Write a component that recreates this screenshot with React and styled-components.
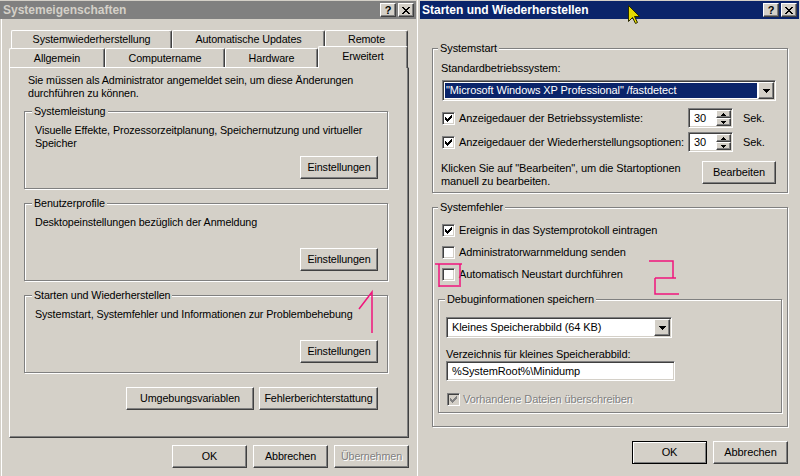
import React from 'react';
import styled, { createGlobalStyle, css } from 'styled-components';

const face = '#d4d0c8';
const shadow = '#808080';
const dark = '#404040';
const navy = '#0a246a';
const pink = '#f0147c';
const font = '"Liberation Sans", Arial, sans-serif';

const GlobalStyle = createGlobalStyle`
  html, body { margin: 0; padding: 0; background: ${face}; }
  body { font-family: ${font}; font-size: 11px; color: #000; }
  * { box-sizing: border-box; }
`;

const Desktop = styled.div`
  position: relative;
  display: flex;
  width: 800px;
  height: 476px;
  overflow: hidden;
  background: ${face};
`;

const Window = styled.div`
  display: flex;
  flex-direction: column;
  height: 476px;
  padding-top: 1px;
  background: ${face};
  line-height: 13px;
`;

const LeftWin = styled(Window)`
  width: 417px;
  flex: none;
  padding-right: 1px;
  font-size: 10.75px;
  letter-spacing: -0.1px;
`;

const RightWin = styled(Window)`
  flex: 1;
  border-left: 1px solid #fff;
  padding-left: 2px;
  padding-right: 1px;
  font-size: 11px;
  letter-spacing: -0.1px;
`;

const TitleBar = styled.div`
  display: flex;
  align-items: center;
  gap: 2px;
  height: 18px;
  flex: none;
  padding: 0 2px 0 ${(p) => (p.$active ? 2 : 3)}px;
  background: ${(p) => (p.$active ? navy : shadow)};
  color: ${(p) => (p.$active ? '#fff' : face)};
  font: bold 12px ${font};
  letter-spacing: 0;
`;

const TitleText = styled.span`
  flex: 1;
  white-space: nowrap;
`;

const raised = css`
  background: ${face};
  border: 1px solid;
  border-color: #fff ${dark} ${dark} #fff;
  box-shadow: inset -1px -1px ${shadow};
`;

const sunken = css`
  border: 1px solid;
  border-color: ${shadow} #fff #fff ${shadow};
  box-shadow: inset 1px 1px ${dark}, inset -1px -1px ${face};
`;

const CaptionBtn = styled.span`
  ${raised};
  width: 16px;
  height: 14px;
  display: flex;
  align-items: center;
  justify-content: center;
  color: #000;
  font: bold 11px ${font};
  line-height: 12px;
`;

const PixelIcon = styled.svg`
  display: block;
  shape-rendering: crispEdges;
  flex: none;
`;

const CloseGlyph = () => (
  <PixelIcon width="8" height="7" viewBox="0 0 8 7">
    <path
      fill="#000"
      d="M0 0h2v1H0z M6 0h2v1H6z M1 1h2v1H1z M5 1h2v1H5z M2 2h4v1H2z M3 3h2v1H3z M2 4h4v1H2z M1 5h2v1H1z M5 5h2v1H5z M0 6h2v1H0z M6 6h2v1H6z"
    />
  </PixelIcon>
);

const CaptionButtons = () => (
  <>
    <CaptionBtn>?</CaptionBtn>
    <CaptionBtn>
      <CloseGlyph />
    </CaptionBtn>
  </>
);

/* ---------- left window ---------- */

const LeftBody = styled.div`
  flex: 1;
  display: flex;
  flex-direction: column;
  padding: 11px 0 0 9px;
  box-shadow: inset 1px 0 ${face}, inset 2px 0 #fff;
`;

const TabStrip = styled.div`
  display: flex;
  flex-direction: column;
`;

const TabRow = styled.div`
  display: flex;
  height: ${(p) => p.$h}px;
  padding-left: ${(p) => p.$indent || 0}px;
`;

const Tab = styled.div`
  width: ${(p) => p.$w}px;
  display: flex;
  align-items: center;
  justify-content: center;
  white-space: nowrap;
  background: ${face};
  border-top: 1px solid #fff;
  border-left: 1px solid #fff;
  border-right: 1px solid ${dark};
  border-radius: 2px 2px 0 0;
  box-shadow: inset -1px 0 ${shadow};
  ${(p) =>
    p.$selected &&
    css`
      position: relative;
      z-index: 1;
      align-self: flex-end;
      height: 22px;
      margin-bottom: -1px;
      padding-bottom: 2px;
    `}
`;

const TabPanel = styled.div`
  width: 400px;
  height: 371px;
  display: flex;
  flex-direction: column;
  padding: 6px 20px 0 14px;
  border: 1px solid;
  border-color: #fff ${dark} ${dark} #fff;
  box-shadow: inset -1px -1px ${shadow};
`;

const Intro = styled.div`
  padding-left: 4px;
  white-space: nowrap;
`;

const GroupStack = styled.div`
  display: flex;
  flex-direction: column;
  gap: 8px;
  margin-top: 5px;
`;

const Group = styled.fieldset`
  margin: ${(p) => p.$mt || 0}px 0 0 ${(p) => p.$ml || 0}px;
  min-width: 0;
  width: ${(p) => (p.$w ? `${p.$w}px` : 'auto')};
  padding: ${(p) => p.$pad};
  border: 1px solid ${shadow};
  box-shadow: inset 1px 1px #fff, 1px 1px #fff;
`;

const Legend = styled.legend`
  padding: 0 2px;
  margin-left: ${(p) => p.$ml ?? -3}px;
  line-height: 13px;
  background: ${face};
  white-space: nowrap;
`;

const GroupContent = styled.div`
  display: flex;
  flex-direction: column;
  height: 55px;
  white-space: nowrap;
`;

const Button = styled.button`
  ${raised};
  width: ${(p) => p.$w || 75}px;
  height: 23px;
  flex: none;
  padding: 0;
  font: inherit;
  letter-spacing: inherit;
  color: #000;
  white-space: nowrap;
  ${(p) =>
    p.$default &&
    css`
      border-color: #000;
      box-shadow: inset 1px 1px #fff, inset -1px -1px ${shadow};
    `}
  ${(p) =>
    p.$disabled &&
    css`
      color: ${shadow};
      text-shadow: 1px 1px #fff;
    `}
`;

const GroupButton = styled(Button)`
  align-self: flex-end;
  margin-top: auto;
`;

const ButtonRow = styled.div`
  display: flex;
  justify-content: flex-end;
  gap: ${(p) => p.$gap ?? 6}px;
  margin-top: ${(p) => p.$mt || 0}px;
  padding-right: ${(p) => p.$pr || 0}px;
  width: ${(p) => (p.$w ? `${p.$w}px` : 'auto')};
`;

const LeftGroup = ({ title, children }) => (
  <Group $pad="6px 9px 9px 10px">
    <Legend>{title}</Legend>
    <GroupContent>
      <div>{children}</div>
      <GroupButton $w={78}>Einstellungen</GroupButton>
    </GroupContent>
  </Group>
);

/* ---------- right window ---------- */

const RightBody = styled.div`
  flex: 1;
  display: flex;
  flex-direction: column;
  padding: 23px 0 0 12px;
`;

const Column = styled.div`
  display: flex;
  flex-direction: column;
`;

const TextLine = styled.div`
  white-space: nowrap;
  margin-top: ${(p) => p.$mt || 0}px;
`;

const Combo = styled.div`
  ${sunken};
  display: flex;
  width: ${(p) => p.$w}px;
  height: 21px;
  padding: 1px;
  margin: ${(p) => p.$mt || 0}px 0 0 ${(p) => p.$ml || 0}px;
  background: #fff;
`;

const ComboValue = styled.div`
  flex: 1;
  display: flex;
  align-items: center;
  padding-left: ${(p) => (p.$selected ? 1 : 3)}px;
  margin: 1px;
  background: ${(p) => (p.$selected ? navy : '#fff')};
  color: ${(p) => (p.$selected ? '#fff' : '#000')};
  white-space: nowrap;
  overflow: hidden;
`;

const DropButton = styled.div`
  ${raised};
  width: 16px;
  flex: none;
  display: flex;
  align-items: center;
  justify-content: center;
`;

const DownArrow = () => (
  <PixelIcon width="7" height="4" viewBox="0 0 7 4">
    <path fill="#000" d="M0 0h7v1H0z M1 1h5v1H1z M2 2h3v1H2z M3 3h1v1H3z" />
  </PixelIcon>
);

const SmallArrow = ({ up }) => (
  <PixelIcon width="5" height="3" viewBox="0 0 5 3">
    <path
      fill="#000"
      d={up ? 'M2 0h1v1H2z M1 1h3v1H1z M0 2h5v1H0z' : 'M0 0h5v1H0z M1 1h3v1H1z M2 2h1v1H2z'}
    />
  </PixelIcon>
);

const SpinRow = styled.div`
  display: grid;
  grid-template-columns: 237px 45px auto;
  column-gap: 10px;
  align-items: center;
  height: 20px;
  margin-top: ${(p) => p.$mt || 0}px;
`;

const SpinBox = styled.div`
  ${sunken};
  display: flex;
  height: 20px;
  padding: 1px;
  background: #fff;
`;

const SpinValue = styled.div`
  flex: 1;
  display: flex;
  align-items: center;
  padding-left: 4px;
`;

const SpinButtons = styled.div`
  width: 15px;
  display: flex;
  flex-direction: column;
`;

const SpinBtn = styled.div`
  ${raised};
  flex: 1;
  display: flex;
  align-items: center;
  justify-content: center;
`;

const CheckRow = styled.div`
  display: flex;
  align-items: center;
  gap: ${(p) => p.$gap ?? 4}px;
  height: 16px;
  white-space: nowrap;
  margin-top: ${(p) => p.$mt || 0}px;
  ${(p) =>
    p.$disabled &&
    css`
      color: ${shadow};
      text-shadow: 1px 1px #fff;
    `}
`;

const CheckBox = styled.span`
  ${sunken};
  width: 13px;
  height: 13px;
  flex: none;
  margin-left: 1px;
  display: flex;
  align-items: center;
  justify-content: center;
  background: ${(p) => (p.$disabled ? face : '#fff')};
`;

const Check = ({ checked, disabled }) => (
  <CheckBox $disabled={disabled}>
    {checked && (
      <PixelIcon width="7" height="7" viewBox="0 0 7 7">
        <path
          fill={disabled ? shadow : '#000'}
          d="M6 0h1v1H6z M5 1h2v1H5z M0 2h1v1H0z M4 2h3v1H4z M0 3h2v1H0z M3 3h3v1H3z M0 4h5v1H0z M1 5h3v1H1z M2 6h1v1H2z"
        />
      </PixelIcon>
    )}
  </CheckBox>
);

const EditRow = styled.div`
  display: flex;
  justify-content: space-between;
  align-items: flex-start;
  height: 27px;
  margin-top: 9px;
`;

const EditText = styled.div`
  padding-top: 1px;
  white-space: nowrap;
`;

const TextField = styled.div`
  ${sunken};
  display: flex;
  align-items: center;
  width: ${(p) => p.$w}px;
  height: 20px;
  padding: 1px 1px 1px 5px;
  background: #fff;
  white-space: nowrap;
`;

/* ---------- overlay: annotations and pointer ---------- */

const Overlay = styled.svg`
  position: absolute;
  left: 0;
  top: 0;
  width: 800px;
  height: 476px;
  pointer-events: none;
`;

const Spinner = () => (
  <SpinBox>
    <SpinValue>30</SpinValue>
    <SpinButtons>
      <SpinBtn>
        <SmallArrow up />
      </SpinBtn>
      <SpinBtn>
        <SmallArrow />
      </SpinBtn>
    </SpinButtons>
  </SpinBox>
);

export default function App() {
  return (
    <>
      <GlobalStyle />
      <Desktop>
        <LeftWin>
          <TitleBar>
            <TitleText>Systemeigenschaften</TitleText>
            <CaptionButtons />
          </TitleBar>
          <LeftBody>
            <TabStrip>
              <TabRow $h={18} $indent={2}>
                <Tab $w={161}>Systemwiederherstellung</Tab>
                <Tab $w={153}>Automatische Updates</Tab>
                <Tab $w={83}>Remote</Tab>
              </TabRow>
              <TabRow $h={19}>
                <Tab $w={96}>Allgemein</Tab>
                <Tab $w={120}>Computername</Tab>
                <Tab $w={93}>Hardware</Tab>
                <Tab $w={90} $selected>
                  Erweitert
                </Tab>
              </TabRow>
            </TabStrip>
            <TabPanel>
              <Intro>
                Sie müssen als Administrator angemeldet sein, um diese Änderungen
                <br />
                durchführen zu können.
              </Intro>
              <GroupStack>
                <LeftGroup title="Systemleistung">
                  Visuelle Effekte, Prozessorzeitplanung, Speichernutzung und virtueller
                  <br />
                  Speicher
                </LeftGroup>
                <LeftGroup title="Benutzerprofile">
                  Desktopeinstellungen bezüglich der Anmeldung
                </LeftGroup>
                <LeftGroup title="Starten und Wiederherstellen">
                  Systemstart, Systemfehler und Informationen zur Problembehebung
                </LeftGroup>
              </GroupStack>
              <ButtonRow $mt={14} $gap={5} $pr={10}>
                <Button $w={128}>Umgebungsvariablen</Button>
                <Button $w={119}>Fehlerberichterstattung</Button>
              </ButtonRow>
            </TabPanel>
            <ButtonRow $mt={7} $w={400}>
              <Button>OK</Button>
              <Button>Abbrechen</Button>
              <Button $disabled>Übernehmen</Button>
            </ButtonRow>
          </LeftBody>
        </LeftWin>

        <RightWin>
          <TitleBar $active>
            <TitleText>Starten und Wiederherstellen</TitleText>
            <CaptionButtons />
          </TitleBar>
          <RightBody>
            <Group $w={356} $pad="7px 11px 4px 8px">
              <Legend>Systemstart</Legend>
              <Column>
                <TextLine>Standardbetriebssystem:</TextLine>
                <Combo $w={334} $mt={5} $ml={1}>
                  <ComboValue $selected>"Microsoft Windows XP Professional" /fastdetect</ComboValue>
                  <DropButton>
                    <DownArrow />
                  </DropButton>
                </Combo>
                <SpinRow $mt={7}>
                  <CheckRow>
                    <Check checked />
                    Anzeigedauer der Betriebssystemliste:
                  </CheckRow>
                  <Spinner />
                  <span>Sek.</span>
                </SpinRow>
                <SpinRow $mt={4}>
                  <CheckRow>
                    <Check checked />
                    Anzeigedauer der Wiederherstellungsoptionen:
                  </CheckRow>
                  <Spinner />
                  <span>Sek.</span>
                </SpinRow>
                <EditRow>
                  <EditText>
                    Klicken Sie auf "Bearbeiten", um die Startoptionen
                    <br />
                    manuell zu bearbeiten.
                  </EditText>
                  <Button $w={74}>Bearbeiten</Button>
                </EditRow>
              </Column>
            </Group>

            <Group $w={356} $mt={8} $pad="8px 11px 13px 8px">
              <Legend>Systemfehler</Legend>
              <Column>
                <CheckRow>
                  <Check checked />
                  Ereignis in das Systemprotokoll eintragen
                </CheckRow>
                <CheckRow $mt={6}>
                  <Check />
                  Administratorwarnmeldung senden
                </CheckRow>
                <CheckRow $mt={6}>
                  <Check />
                  Automatisch Neustart durchführen
                </CheckRow>
                <Group $w={344} $ml={-3} $mt={11} $pad="11px 8px 5px 7px">
                  <Legend $ml={-1}>Debuginformationen speichern</Legend>
                  <Column>
                    <Combo $w={226}>
                      <ComboValue>Kleines Speicherabbild (64 KB)</ComboValue>
                      <DropButton>
                        <DownArrow />
                      </DropButton>
                    </Combo>
                    <TextLine $mt={10}>Verzeichnis für kleines Speicherabbild:</TextLine>
                    <TextField $w={229}>%SystemRoot%\Minidump</TextField>
                    <CheckRow $mt={10} $gap={3} $disabled>
                      <Check checked disabled />
                      Vorhandene Dateien überschreiben
                    </CheckRow>
                  </Column>
                </Group>
              </Column>
            </Group>

            <ButtonRow $mt={14} $w={356}>
              <Button $default>OK</Button>
              <Button>Abbrechen</Button>
            </ButtonRow>
          </RightBody>
        </RightWin>

        <Overlay viewBox="0 0 800 476">
          <g fill="none" stroke={pink} strokeWidth="1.5">
            <path d="M372 333 V292 L359 309" />
            <path d="M435 264 H462 M439 264 V287 M460 264 V287 M439 286 H459" />
            <path d="M649 261 H673 V278 H676 M655 278 H673 M655 278 V294 H679" />
          </g>
          <path
            d="M628.5 5.5 V21.5 L632.5 17.5 L635.5 23.5 L637.5 22.5 L634.5 16.5 H639.5 Z"
            fill="#e6dc00"
            stroke="#2a2a00"
            strokeWidth="1"
          />
        </Overlay>
      </Desktop>
    </>
  );
}
